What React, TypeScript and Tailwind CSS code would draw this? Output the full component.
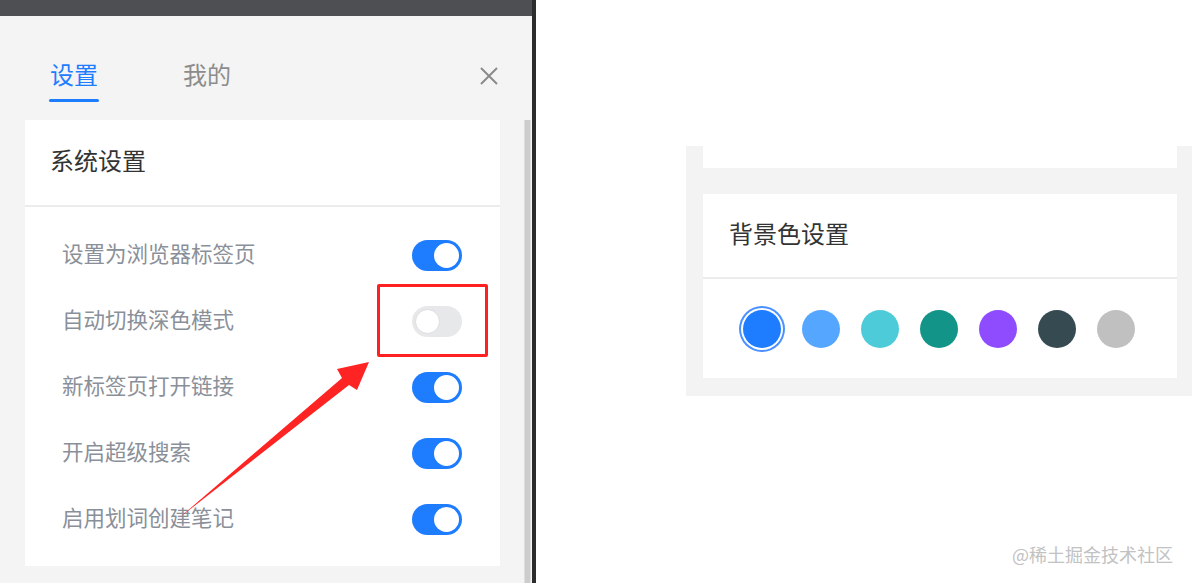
const FONT = { fontFamily: '"Noto Sans CJK SC", "Noto Sans", sans-serif' };

const SETTINGS = [
  { label: "设置为浏览器标签页", on: true },
  { label: "自动切换深色模式", on: false },
  { label: "新标签页打开链接", on: true },
  { label: "开启超级搜索", on: true },
  { label: "启用划词创建笔记", on: true },
];

const COLORS = ["#1e7cff", "#55a6ff", "#4dcbd9", "#129588", "#8f4cff", "#364a52", "#c0c0c0"];

function Toggle({ on }: { on: boolean }) {
  return (
    <div
      className={`w-[50px] h-[31px] rounded-full p-[3px] flex ${
        on ? "bg-[#1e7cff] justify-end" : "bg-[#e7e8ea] justify-start"
      }`}
    >
      <div
        className={`w-[25px] h-[25px] rounded-full bg-white ${
          on ? "" : "border border-[#dcdde0]"
        }`}
      />
    </div>
  );
}

export default function App() {
  return (
    <div className="relative w-[1192px] h-[583px] bg-white flex overflow-hidden" style={FONT}>
      {/* Left screenshot: settings drawer */}
      <div className="w-[532px] flex flex-col">
        <div className="h-[16px] bg-[#4e4f53]" />
        <div className="flex-1 bg-[#f4f4f4] flex">
          <div className="flex-1 flex flex-col">
            {/* Tabs */}
            <div className="h-[104px] flex items-start pl-[49px] pr-[26px]">
              <div className="flex flex-col items-center pt-[41px]">
                <span className="text-[24px] leading-[34px] text-[#1e7cff]">设置</span>
                <div className="mt-[8px] w-[50px] h-[3px] rounded-full bg-[#1e7cff]" />
              </div>
              <span className="ml-[84px] pt-[41px] text-[24px] leading-[34px] text-[#8c8c8c]">我的</span>
              <div className="ml-auto pt-[51px]">
                <svg width="18" height="18" viewBox="0 0 18 18">
                  <path d="M1 1 L17 17 M17 1 L1 17" stroke="#8a8a8a" strokeWidth="2" />
                </svg>
              </div>
            </div>
            {/* Card */}
            <div className="ml-[25px] w-[475px] h-[446px] bg-white flex flex-col">
              <div className="h-[85px] flex items-center pl-[25px] pb-[5px] text-[24px] text-[#333]">系统设置</div>
              <div className="h-[2px] bg-[#ececec]" />
              <div className="pt-[15px] flex flex-col">
                {SETTINGS.map((s) => (
                  <div key={s.label} className="h-[66px] flex items-center pl-[37px] pr-[38px]">
                    <span className="text-[21.5px] leading-[30px] pb-[5px] text-[#8a9099]">{s.label}</span>
                    <div className="ml-auto">
                      <Toggle on={s.on} />
                    </div>
                  </div>
                ))}
              </div>
            </div>
          </div>
          {/* scrollbar */}
          <div className="w-[7px] mr-[1px] pt-[104px] flex">
            <div className="flex-1 bg-[#cdcdcd] border-x border-[#dedede]" />
          </div>
        </div>
      </div>
      <div className="w-[4px] bg-[#2c2c2c]" />

      {/* Right screenshot: background colour */}
      <div className="flex-1 pt-[146px] pl-[150px]">
        <div className="w-[506px] h-[250px] bg-[#f3f3f3] pl-[17px] pr-[15px] flex flex-col">
          <div className="h-[22px] bg-white" />
          <div className="mt-[26px] h-[184px] bg-white flex flex-col">
            <div className="h-[83px] flex items-center pl-[26px] pb-[6px] text-[24px] text-[#333]">背景色设置</div>
            <div className="h-[2px] bg-[#ececec]" />
            <div className="flex-1 flex items-center pl-[40px] gap-[21px]">
              {COLORS.map((c, i) => (
                <div
                  key={c}
                  className={`w-[38px] h-[38px] rounded-full ${
                    i === 0 ? "ring-2 ring-[#4a90ff] ring-offset-2" : ""
                  }`}
                  style={{ backgroundColor: c }}
                />
              ))}
            </div>
          </div>
        </div>
      </div>

      {/* Annotation: red box and arrow */}
      <div className="absolute left-[377px] top-[284px] w-[111px] h-[73px] border-[3px] border-[#ff2121] rounded-[2px]" />
      <svg className="absolute left-0 top-0" width="1192" height="583" viewBox="0 0 1192 583">
        <polygon
          points="179,518 342,378 337,369 369,362 357,390 349,385"
          fill="#ff2424"
        />
      </svg>

      {/* Watermark */}
      <div className="absolute right-[19px] bottom-[18px] text-[18px] leading-[22px] text-[#c2c2c2]">
        @稀土掘金技术社区
      </div>
    </div>
  );
}
